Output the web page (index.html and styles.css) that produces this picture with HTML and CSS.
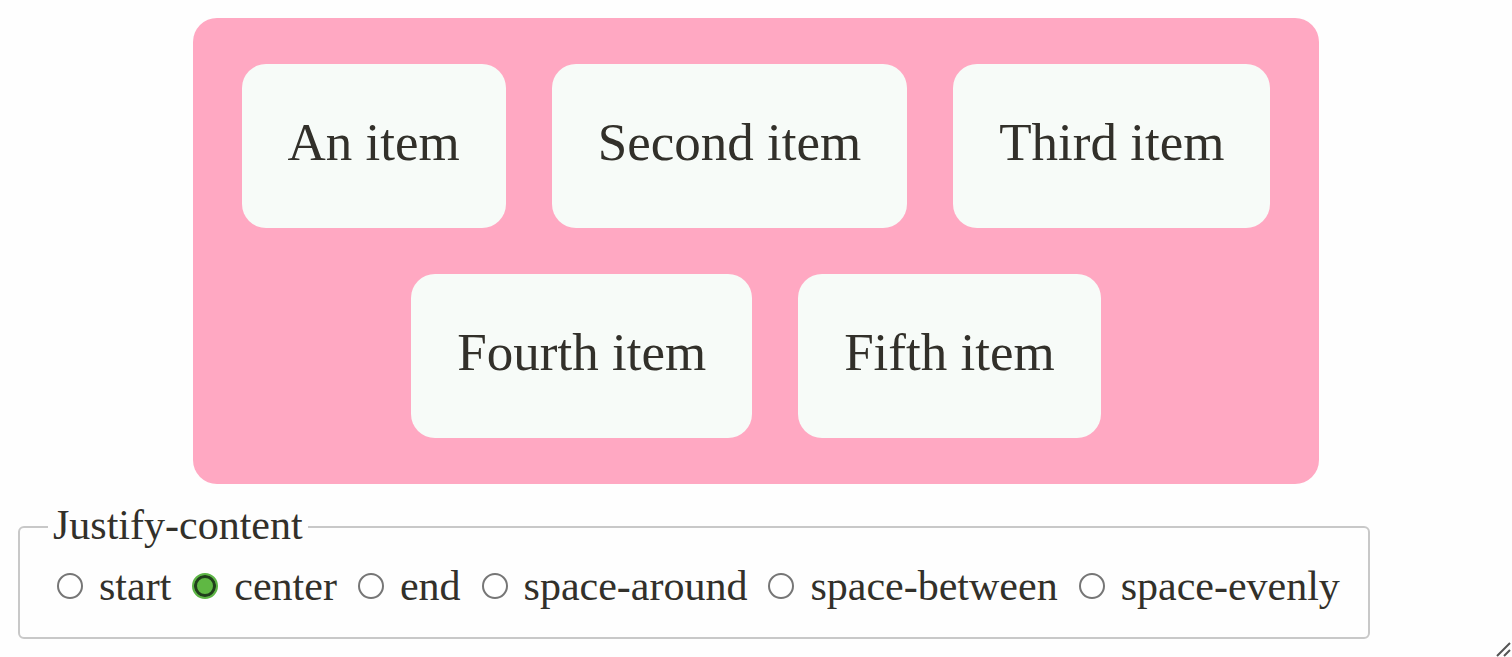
FILE: index.html
```html
<!DOCTYPE html>
<html lang="en">
<head>
<meta charset="utf-8">
<meta name="viewport" content="width=device-width, initial-scale=1">
<title>Justify-content</title>
<link rel="stylesheet" href="styles.css">
</head>
<body>
<main class="demo">
  <div class="container">
    <div class="item">An item</div>
    <div class="item">Second item</div>
    <div class="item">Third item</div>
    <div class="item">Fourth item</div>
    <div class="item">Fifth item</div>
  </div>
  <fieldset class="options">
    <legend class="legend">Justify-content</legend>
    <div class="choices">
      <label class="choice"><input class="radio" type="radio" name="justify" value="start">start</label>
      <label class="choice"><input class="radio" type="radio" name="justify" value="center" checked>center</label>
      <label class="choice"><input class="radio" type="radio" name="justify" value="end">end</label>
      <label class="choice"><input class="radio" type="radio" name="justify" value="space-around">space-around</label>
      <label class="choice"><input class="radio" type="radio" name="justify" value="space-between">space-between</label>
      <label class="choice"><input class="radio" type="radio" name="justify" value="space-evenly">space-evenly</label>
    </div>
  </fieldset>
  <svg class="grip" width="16" height="16" viewBox="0 0 16 16" aria-hidden="true"><path d="M1 15 14 2M8 15l6-6" fill="none" stroke="#555" stroke-width="2"/></svg>
</main>
</body>
</html>
```
FILE: styles.css
```css
* { box-sizing: border-box; }

body {
  margin: 0;
  background: #fefefe;
  color: #32302a;
  font-family: "Liberation Serif", "Times New Roman", serif;
  font-size: 42px;
  line-height: 48px;
}

.demo {
  position: relative;
  min-height: 100vh;
  padding: 18px;
}

.container {
  display: flex;
  flex-wrap: wrap;
  justify-content: center;
  gap: 46px;
  max-width: 1126px;
  margin: 0 auto;
  padding: 46px;
  border-radius: 24px;
  background: #ffa8c2;
}

.item {
  padding: 42px 46px 50px;
  border-radius: 24px;
  background: #f7fbf8;
  font-size: 53px;
  line-height: 72px;
}

.options {
  width: fit-content;
  margin: 17px 0 0;
  padding: 9px 28px 27px;
  border: 2px solid #c8c8c8;
  border-radius: 6px;
}

.legend { padding: 0 5px 4px; }

.choices {
  display: flex;
  flex-wrap: wrap;
  gap: 21px;
  padding-left: 9px;
}

.choice {
  display: flex;
  align-items: center;
  gap: 16px;
}

.radio {
  appearance: none;
  width: 26px;
  height: 26px;
  margin: 0;
  border: 2px solid #767676;
  border-radius: 50%;
  background: #fff;
}

.radio:checked {
  border: 2px solid #5db546;
  background: #5fb843;
  box-shadow: inset 0 0 0 3px #203f1c;
}

.grip {
  position: absolute;
  right: 0;
  bottom: 0;
}
```
